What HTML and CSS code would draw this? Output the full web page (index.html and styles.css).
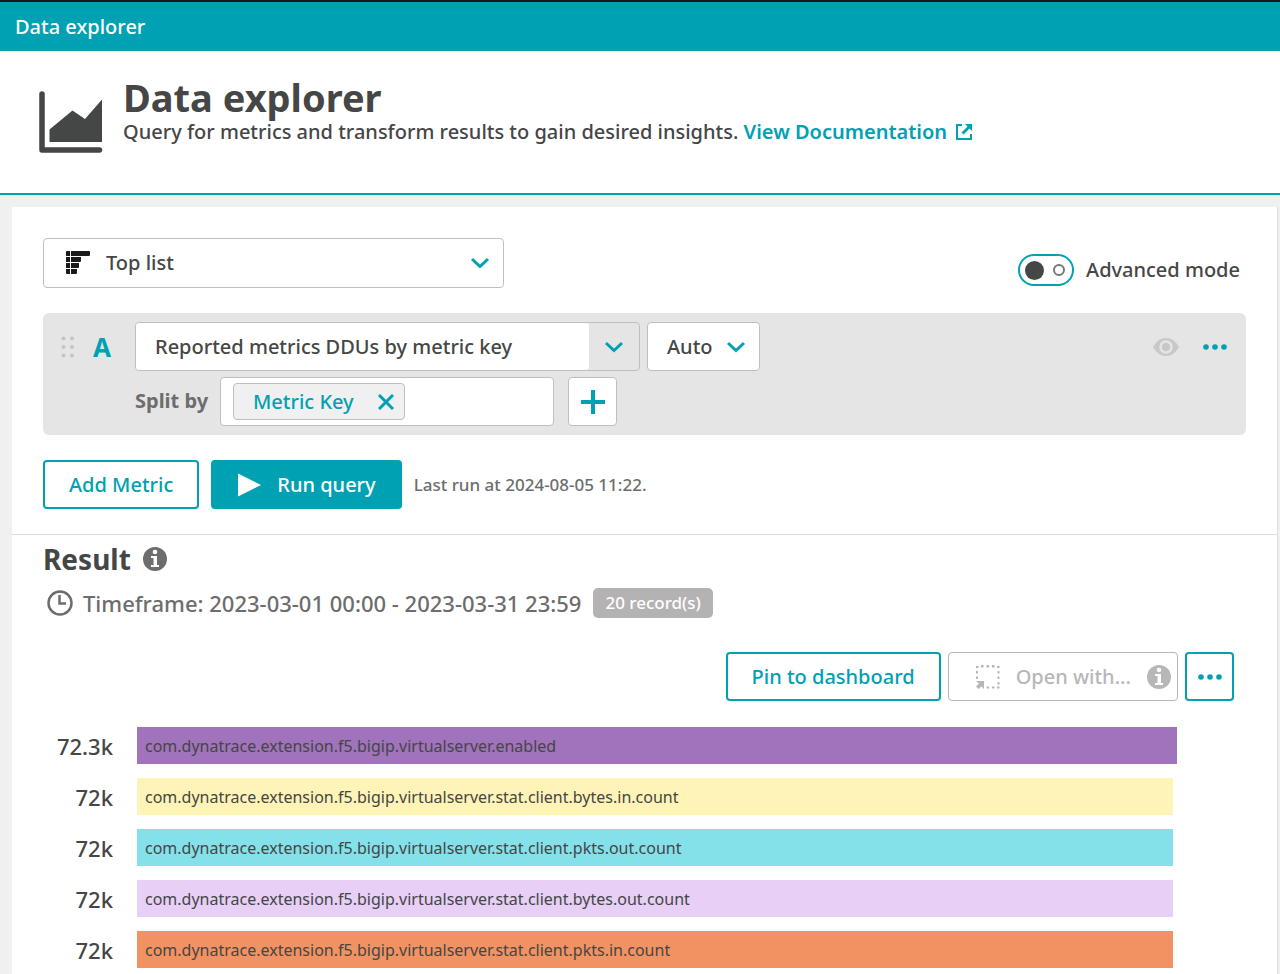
FILE: index.html
```html
<!DOCTYPE html>
<html lang="en">
<head>
<meta charset="utf-8">
<meta name="viewport" content="width=device-width, initial-scale=1">
<title>Data explorer</title>
<link rel="stylesheet" href="styles.css">
</head>
<body>
<nav class="topbar" aria-label="Breadcrumb"><a class="crumb" href="#">Data explorer</a></nav>

<header class="page-header">
  <svg class="page-icon" viewBox="0 0 64 64" aria-hidden="true">
    <path d="M3 4V60H60.500" fill="none" stroke="currentColor" stroke-width="5.500" stroke-linecap="round" stroke-linejoin="round"/>
    <path d="M10.500 39.500 33.500 20.500 46 29 63 9.500V52H10.500Z" fill="currentColor"/>
  </svg>
  <div class="page-heading">
    <h1 class="page-title">Data explorer</h1>
    <p class="page-intro">Query for metrics and transform results to gain desired insights.
      <a class="doc-link" href="#">View Documentation<svg class="external" viewBox="0 0 18 18" aria-hidden="true"><path d="M7 2H2V16H16V11" fill="none" stroke="currentColor" stroke-width="2"/><path d="M10 1H17V8L14.500 5.500 8.500 11.500 6.500 9.500 12.500 3.500Z" fill="currentColor"/></svg></a>
    </p>
  </div>
</header>

<main class="card">
  <section class="query">
    <div class="toolbar">
      <div class="viz-picker">
        <svg class="toplist-icon" viewBox="0 0 24 24" aria-hidden="true"><path d="M0 1q0-1 1-1h3v5H0zM5 0h18q1 0 1 1v3q0 1-1 1H5zM0 6h4v5H0zM5 6h10v4q0 1-1 1H5zM0 12h4v5H0zM5 12h8v4q0 1-1 1H5zM0 18h4v5H1q-1 0-1-1zM5 18h6v4q0 1-1 1H5z" fill="#1a1a1a"/></svg>
        <select class="select viz-select" aria-label="Visualization"><option>Top list</option></select>
        <svg class="chevron" viewBox="0 0 20 20" aria-hidden="true"><path d="M2 6 10 13.500 18 6"/></svg>
      </div>
      <label class="mode"><input class="switch" type="checkbox" role="switch"><span>Advanced mode</span></label>
    </div>

    <div class="metric">
      <svg class="grip" viewBox="0 0 14 22" aria-hidden="true"><g fill="#c4c4c4"><circle cx="2.500" cy="2.500" r="2"/><circle cx="11" cy="2.500" r="2"/><circle cx="2.500" cy="11" r="2"/><circle cx="11" cy="11" r="2"/><circle cx="2.500" cy="19.500" r="2"/><circle cx="11" cy="19.500" r="2"/></g></svg>
      <span class="metric-letter">A</span>
      <div class="metric-source">
        <div class="combo">
          <input class="combo-input" type="text" aria-label="Metric" value="Reported metrics DDUs by metric key">
          <button class="combo-toggle" type="button" aria-label="Show metrics"><svg class="chevron" viewBox="0 0 20 20" aria-hidden="true"><path d="M2 6 10 13.500 18 6"/></svg></button>
        </div>
        <div class="agg">
          <select class="select agg-select" aria-label="Aggregation"><option>Auto</option></select>
          <svg class="chevron" viewBox="0 0 20 20" aria-hidden="true"><path d="M2 6 10 13.500 18 6"/></svg>
        </div>
      </div>
      <div class="metric-actions">
        <button class="icon-button" type="button" aria-label="Hide metric" disabled><svg class="eye" viewBox="0 0 28 20" aria-hidden="true"><path d="M1 10Q6 1 14 1T27 10Q22 19 14 19T1 10Z" fill="#c8c8c8"/><circle cx="14" cy="10" r="5.500" fill="#c8c8c8" stroke="#e5e5e5" stroke-width="2.500"/></svg></button>
        <button class="icon-button" type="button" aria-label="More metric options"><svg class="dots" viewBox="0 0 24 6" aria-hidden="true"><circle cx="3" cy="3" r="2.800"/><circle cx="12" cy="3" r="2.800"/><circle cx="21" cy="3" r="2.800"/></svg></button>
      </div>
      <div class="split">
        <label class="split-label" for="split">Split by</label>
        <div class="split-box">
          <span class="chip">Metric Key<button class="chip-remove" type="button" aria-label="Remove Metric Key"><svg class="cross" viewBox="0 0 16 16" aria-hidden="true"><path d="M1 1 15 15M15 1 1 15"/></svg></button></span>
          <input class="split-input" id="split" type="text">
        </div>
        <button class="add-button" type="button" aria-label="Add filter"><svg class="plus" viewBox="0 0 24 24" aria-hidden="true"><path d="M12 0V24M0 12H24"/></svg></button>
      </div>
    </div>

    <div class="run">
      <button class="button" type="button">Add Metric</button>
      <button class="button button-primary" type="button"><svg class="play" viewBox="0 0 24 24" aria-hidden="true"><path d="M1 0.500 24 12 1 23.500Z" fill="currentColor"/></svg>Run query</button>
      <span class="last-run">Last run at 2024-08-05 11:22.</span>
    </div>
  </section>

  <section class="result">
    <h2 class="result-title">Result
      <svg class="info" viewBox="0 0 24 24" role="img" aria-label="Information"><circle cx="12" cy="12" r="12" fill="currentColor"/><circle cx="12" cy="5" r="2.300" fill="#fff"/><path d="M8 9H14V18H16V20H8V18H10.500V11H8Z" fill="#fff"/></svg>
    </h2>
    <div class="timeframe">
      <svg class="clock" viewBox="0 0 26 26" aria-hidden="true"><circle cx="13" cy="13" r="11.500"/><path d="M12.500 5V13.500H19"/></svg>
      <span>Timeframe: 2023-03-01 00:00 - 2023-03-31 23:59</span>
      <span class="badge">20 record(s)</span>
    </div>
    <div class="result-actions">
      <button class="button" type="button">Pin to dashboard</button>
      <button class="button button-open" type="button" disabled>
        <svg class="open-icon" viewBox="0 0 24 24" aria-hidden="true"><g fill="currentColor"><path d="M0 1h2.500v2H0zM5 0h2.500v2.500H5zM10.500 0H13v2.500h-2.500zM16 0h2.500v2.500H16zM21 1h2.500v2H21zM0 6h2v2.500H0zM0 11.500h2V14H0zM21.500 6h2v2.500h-2zM21.500 11.500h2V14h-2zM21.500 17h2v2.500h-2zM10.500 21.500H13v2h-2.500zM16 21.500h2.500v2H16zM21 21.500h2.500v2H21z"/><path d="M0 16H8V24L5.500 21.500 2.500 24 0 21.500 3 18.500Z"/></g></svg>
        <span>Open with...</span>
        <svg class="info info-end" viewBox="0 0 24 24" aria-hidden="true"><circle cx="12" cy="12" r="12" fill="currentColor"/><circle cx="12" cy="5" r="2.300" fill="#fff"/><path d="M8 9H14V18H16V20H8V18H10.500V11H8Z" fill="#fff"/></svg>
      </button>
      <button class="button button-more" type="button" aria-label="More result options"><svg class="dots" viewBox="0 0 24 6" aria-hidden="true"><circle cx="3" cy="3" r="2.800"/><circle cx="12" cy="3" r="2.800"/><circle cx="21" cy="3" r="2.800"/></svg></button>
    </div>
    <ol class="toplist">
      <li class="row"><span class="value">72.3k</span><span class="track"><span class="bar purple" style="width:100%">com.dynatrace.extension.f5.bigip.virtualserver.enabled</span></span></li>
      <li class="row"><span class="value">72k</span><span class="track"><span class="bar yellow" style="width:99.6%">com.dynatrace.extension.f5.bigip.virtualserver.stat.client.bytes.in.count</span></span></li>
      <li class="row"><span class="value">72k</span><span class="track"><span class="bar cyan" style="width:99.6%">com.dynatrace.extension.f5.bigip.virtualserver.stat.client.pkts.out.count</span></span></li>
      <li class="row"><span class="value">72k</span><span class="track"><span class="bar lilac" style="width:99.6%">com.dynatrace.extension.f5.bigip.virtualserver.stat.client.bytes.out.count</span></span></li>
      <li class="row"><span class="value">72k</span><span class="track"><span class="bar orange" style="width:99.6%">com.dynatrace.extension.f5.bigip.virtualserver.stat.client.pkts.in.count</span></span></li>
    </ol>
  </section>
</main>
</body>
</html>
```
FILE: styles.css
```css
:root {
  --teal: #00a1b2;
  --ink: #454646;
  --muted: #6d6d6d;
  --line: #bfbfbf;
  --disabled: #b7b7b7;
}

* { box-sizing: border-box; }

body {
  display: flex;
  flex-direction: column;
  min-height: 100vh;
  margin: 0;
  background: #f0f0f0;
  color: var(--ink);
  font: 500 20px/30px "Noto Sans", "Open Sans", sans-serif;
}

button, input, select { font: inherit; color: inherit; }
button { padding: 0; cursor: pointer; }
button:disabled { cursor: default; }
svg { display: block; flex: none; }

.topbar {
  display: flex;
  align-items: center;
  height: 51px;
  padding: 0 15px;
  border-top: 2px solid #191919;
  background: var(--teal);
}
.crumb { color: #fff; text-decoration: none; }

.page-header {
  display: flex;
  gap: 20px;
  padding: 23px 39px 39px;
  border-bottom: 2px solid var(--teal);
  background: #fff;
}
.page-icon { width: 64px; height: 64px; margin-top: 16px; }
.page-title { margin: 0; font-size: 38px; line-height: 46px; font-weight: 700; }
.page-intro { margin: 0; line-height: 24px; }
.doc-link { color: var(--teal); font-weight: 600; text-decoration: none; }
.external { display: inline-block; width: 18px; height: 18px; margin-left: 8px; vertical-align: -2px; }

.card {
  flex: 1;
  margin: 12px 2px 0 12px;
  border-right: 1px solid #dedede;
  background: #fff;
}

.query { padding: 31px 31px 25px; border-bottom: 1px solid #dedede; }
.toolbar { display: flex; justify-content: space-between; margin-bottom: 25px; }

.select {
  width: 100%;
  border: 1px solid var(--line);
  border-radius: 4px;
  background: #fff;
  appearance: none;
}
.chevron { width: 20px; height: 20px; fill: none; stroke: var(--teal); stroke-width: 3; pointer-events: none; }

.viz-picker, .agg { display: grid; align-items: center; }
.viz-picker > *, .agg > * { grid-area: 1 / 1; }
.viz-picker { width: 461px; }
.viz-select { height: 50px; padding: 0 62px; }
.viz-picker .chevron { justify-self: end; margin-right: 14px; z-index: 1; }
.toplist-icon { width: 24px; height: 24px; margin-left: 23px; z-index: 1; }

.mode { display: flex; align-items: center; gap: 12px; align-self: end; height: 36px; padding-right: 6px; }
.switch {
  display: flex;
  align-items: center;
  justify-content: space-between;
  width: 56px;
  height: 32px;
  margin: 0;
  padding: 0 7px 0 5px;
  border: 2px solid var(--teal);
  border-radius: 16px;
  background: #fff;
  appearance: none;
}
.switch::before { content: ""; width: 19px; height: 19px; border-radius: 50%; background: var(--ink); }
.switch::after { content: ""; box-sizing: border-box; width: 12px; height: 12px; border: 2px solid #777; border-radius: 50%; }
.switch:checked { flex-direction: row-reverse; }

.metric {
  display: grid;
  grid-template-columns: 14px 22px 1fr auto;
  column-gap: 16px;
  row-gap: 6px;
  align-items: center;
  padding: 9px 19px 9px 18px;
  border-radius: 6px;
  background: #e5e5e5;
}
.grip { width: 14px; height: 22px; }
.metric-letter { color: var(--teal); font-size: 26px; font-weight: 700; text-align: center; }
.metric-source { display: flex; gap: 7px; margin-left: 6px; }
.combo { display: flex; width: 505px; height: 49px; border: 1px solid var(--line); border-radius: 4px; }
.combo-input { flex: 1; min-width: 0; padding: 0 19px; border: 0; border-radius: 3px; background: #fff; }
.combo-toggle { display: grid; place-items: center; width: 50px; border: 0; background: none; }
.agg { width: 113px; }
.agg-select { height: 49px; padding: 0 19px; }
.agg .chevron { justify-self: end; margin-right: 14px; z-index: 1; }
.metric-actions { display: flex; align-items: center; gap: 23px; }
.icon-button { border: 0; background: none; }
.eye { width: 28px; height: 20px; }
.dots { width: 24px; height: 6px; fill: var(--teal); }

.split { display: flex; grid-column: 3; margin-left: 6px; }
.split-label { width: 85px; color: var(--muted); font-weight: 700; line-height: 48px; }
.split-box { display: flex; align-items: center; width: 334px; height: 49px; padding: 0 12px; border: 1px solid var(--line); border-radius: 4px; background: #fff; }
.chip { display: flex; flex: none; align-items: center; justify-content: space-between; width: 172px; height: 37px; padding: 0 10px 0 19px; border: 1px solid var(--line); border-radius: 4px; background: #f0f0f0; color: var(--teal); }
.chip-remove { border: 0; background: none; }
.cross { width: 16px; height: 16px; fill: none; stroke: var(--teal); stroke-width: 3; }
.split-input { flex: 1; min-width: 0; border: 0; background: none; }
.add-button { display: grid; place-items: center; width: 49px; height: 49px; margin-left: 14px; border: 1px solid var(--line); border-radius: 4px; background: #fff; }
.plus { width: 24px; height: 24px; fill: none; stroke: var(--teal); stroke-width: 4; }

.run { display: flex; align-items: center; gap: 12px; margin-top: 25px; }
.button {
  display: flex;
  align-items: center;
  justify-content: center;
  height: 49px;
  padding: 0 24px;
  border: 2px solid var(--teal);
  border-radius: 4px;
  background: #fff;
  color: var(--teal);
}
.button-primary { gap: 16px; background: var(--teal); color: #fff; }
.play { width: 24px; height: 24px; }
.last-run { color: var(--muted); font-size: 17px; }

.result { padding: 5px 31px 7px; }
.result-title { display: flex; align-items: center; gap: 12px; margin: 0; font-size: 28px; line-height: 38px; font-weight: 700; }
.info { width: 24px; height: 24px; color: var(--muted); }
.timeframe { display: flex; align-items: center; gap: 10px; margin-top: 10px; padding-left: 4px; color: var(--muted); font-size: 22px; }
.clock { width: 26px; height: 26px; fill: none; stroke: var(--muted); stroke-width: 2.500; }
.badge { margin-left: 2px; padding: 0 12px; border-radius: 5px; background: #b4b2b2; color: #fff; font-size: 17px; }
.result-actions { display: flex; justify-content: flex-end; gap: 7px; margin-top: 34px; padding-right: 12px; }
.button-open { gap: 16px; padding: 0 6px 0 27px; border: 1px solid var(--disabled); color: var(--disabled); }
.open-icon { width: 24px; height: 24px; }
.info-end { color: var(--disabled); }
.button-more { width: 49px; padding: 0; }

.toplist { display: flex; flex-direction: column; gap: 14px; margin: 26px 0 0; padding: 0 69px 0 0; list-style: none; }
.row { display: flex; align-items: center; gap: 24px; }
.value { width: 70px; font-size: 22px; text-align: right; }
.track { flex: 1; }
.bar { display: block; height: 37px; padding: 0 8px; font-size: 16px; font-weight: 400; line-height: 39px; white-space: nowrap; }
.purple { background: #a073bc; }
.yellow { background: #fff4b7; }
.cyan { background: #84e1e9; }
.lilac { background: #e7cff6; }
.orange { background: #f29262; }
```
